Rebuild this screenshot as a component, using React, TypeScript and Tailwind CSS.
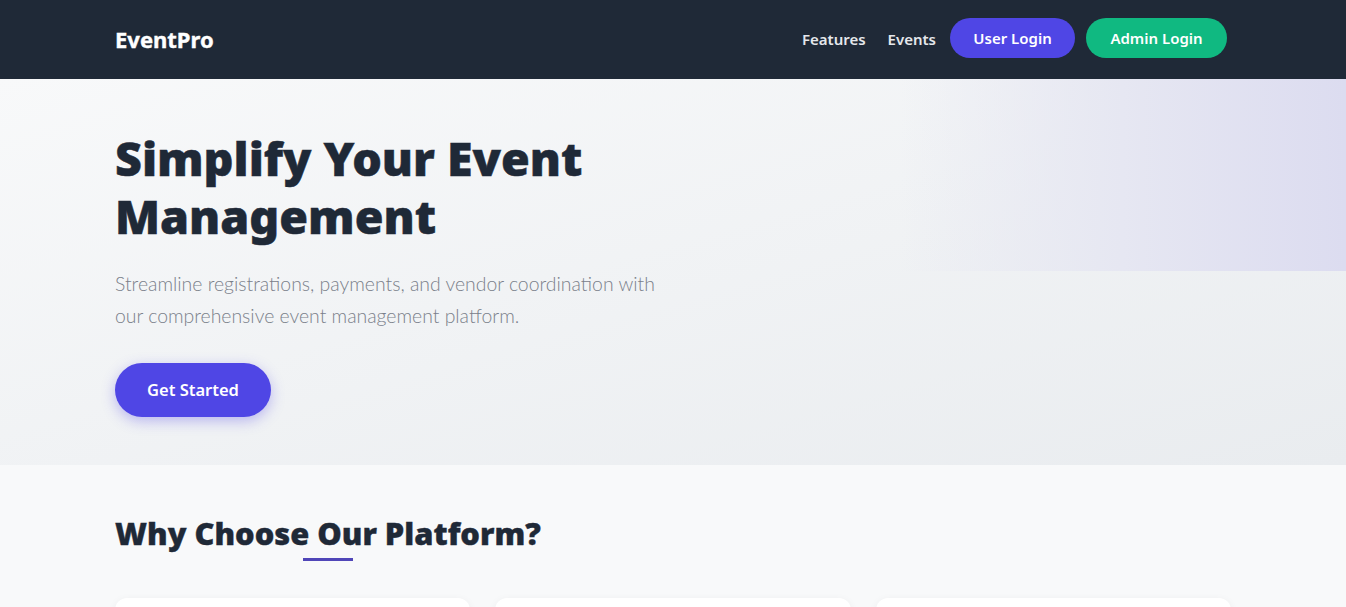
import React from 'react'

const navLinks = ['Features', 'Events']

function Navbar() {
  return (
    <nav className="h-[79px] bg-[#1f2937]">
      <div className="mx-auto flex h-full w-[1116px] items-center justify-between pr-1">
        <span className="text-[22px] font-bold text-white [-webkit-text-stroke:0.4px_#fff]">EventPro</span>
        <div className="flex items-center pb-[3px]">
          {navLinks.map((l) => (
            <a key={l} href="#" className="mr-[22px] mt-[3px] text-[15px] font-semibold text-gray-200">
              {l}
            </a>
          ))}
          <a
            href="#"
            className="-ml-2 flex h-10 w-[125px] items-center justify-center rounded-full bg-[#4f46e5] text-[15px] font-semibold text-white"
          >
            User Login
          </a>
          <a
            href="#"
            className="ml-[11px] flex h-10 w-[141px] items-center justify-center rounded-full bg-[#10b981] text-[15px] font-semibold text-white"
          >
            Admin Login
          </a>
        </div>
      </div>
    </nav>
  )
}

function Hero() {
  return (
    <section className="relative h-[386px] overflow-hidden bg-gradient-to-br from-[#f8f9fa] to-[#e9ecef]">
      {/* soft tint in the corner */}
      <div className="absolute right-0 top-0 h-[192px] w-[446px] bg-gradient-to-r from-[#eef0f4]/0 via-[#e6e7f2] to-[#dcdcf0]" />
      <div className="relative mx-auto w-[1116px] pt-[50px]">
        <h1 className="text-[46.6px] font-black leading-[58px] text-[#1f2937] [-webkit-text-stroke:0.5px_#1f2937]">
          Simplify Your Event
          <br />
          Management
        </h1>
        <p className="mt-[23px] w-[570px] font-['Lato',sans-serif] text-[19.4px] font-light leading-8 text-[#7a808a]">
          Streamline registrations, payments, and vendor coordination with our comprehensive event
          management platform.
        </p>
        <a
          href="#"
          className="mt-[31px] flex h-[54px] w-[156px] items-center justify-center rounded-full bg-[#4f46e5] text-[16.5px] font-semibold text-white shadow-[0_4px_14px_rgba(79,70,229,0.35)]"
        >
          Get Started
        </a>
      </div>
    </section>
  )
}

function Features() {
  return (
    <section className="bg-[#f8f9fa]">
      <div className="mx-auto w-[1116px] pt-[48px]">
        <div className="relative inline-block">
          <h2 className="text-[30.8px] font-black leading-[40px] text-[#1f2937] [-webkit-text-stroke:0.4px_#1f2937]">
            Why Choose Our Platform?
          </h2>
          <div className="absolute left-1/2 top-[45px] h-[3px] w-[50px] -translate-x-1/2 bg-[#5046b8]" />
        </div>
        <div className="mt-[45px] grid grid-cols-3 gap-[25px]">
          {[0, 1, 2].map((i) => (
            <div key={i} className="h-[200px] rounded-xl bg-white shadow-[0_2px_8px_rgba(0,0,0,0.06)]" />
          ))}
        </div>
      </div>
    </section>
  )
}

export default function App() {
  return (
    <div className="min-h-screen bg-[#f8f9fa] font-['Noto_Sans',sans-serif]">
      <Navbar />
      <Hero />
      <Features />
    </div>
  )
}
